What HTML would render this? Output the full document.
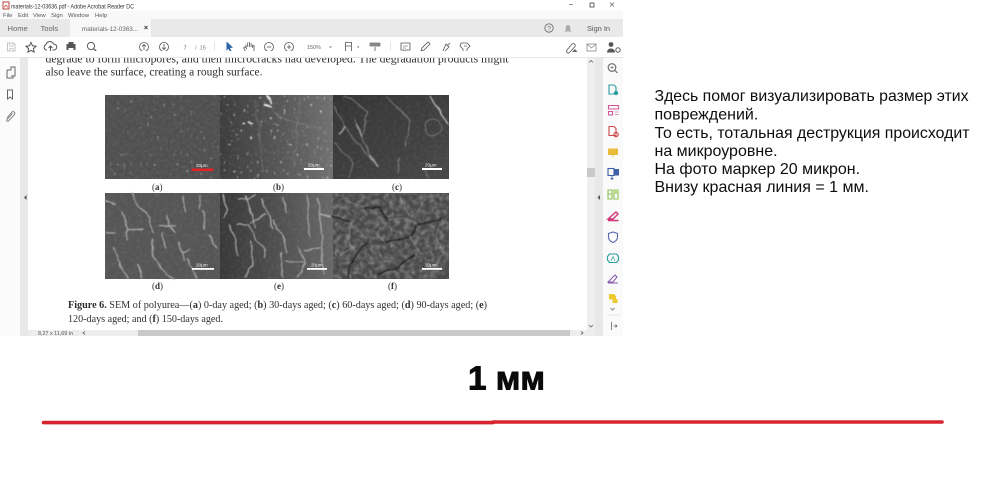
<!DOCTYPE html>
<html><head><meta charset="utf-8"><style>
html,body{margin:0;padding:0;background:#fff;width:1000px;height:484px;overflow:hidden}
svg{display:block;position:absolute;left:0;top:0}
.u{font-family:"Liberation Sans",sans-serif}
.s{font-family:"Liberation Serif",serif;fill:#2e2e2e}
.r{font-family:"Liberation Sans",sans-serif;font-size:16px;fill:#0d0d0d}
</style></head><body>
<svg width="1000" height="484" viewBox="0 0 1000 484" xmlns="http://www.w3.org/2000/svg">
<defs>
<filter id="n" x="0" y="0" width="100%" height="100%"><feTurbulence type="fractalNoise" baseFrequency=".35" numOctaves="2" seed="4"/><feColorMatrix values="0 0 0 0 1 0 0 0 0 1 0 0 0 0 1 1.6 0 0 0 -.72"/><feGaussianBlur stdDeviation=".5"/></filter>
<filter id="sp" x="0" y="0" width="100%" height="100%"><feTurbulence type="fractalNoise" baseFrequency=".3" numOctaves="1" seed="9"/><feColorMatrix values="0 0 0 0 1 0 0 0 0 1 0 0 0 0 1 8 0 0 0 -5.300"/><feGaussianBlur stdDeviation=".4"/></filter>
<filter id="m" x="0" y="0" width="100%" height="100%"><feTurbulence type="fractalNoise" baseFrequency=".2" numOctaves="3" seed="12"/><feColorMatrix values="0 0 0 0 .8 0 0 0 0 .8 0 0 0 0 .8 2 0 0 0 -.8"/><feGaussianBlur stdDeviation=".4"/></filter>
<filter id="w" x="100" y="90" width="355" height="195" filterUnits="userSpaceOnUse"><feTurbulence type="fractalNoise" baseFrequency=".09" numOctaves="2" seed="3" result="t"/><feDisplacementMap in="SourceGraphic" in2="t" scale="5" xChannelSelector="R" yChannelSelector="G"/><feGaussianBlur stdDeviation=".55"/></filter>
<filter id="soft" x="0" y="0" width="640" height="350" filterUnits="userSpaceOnUse"><feGaussianBlur stdDeviation=".28"/></filter>
<linearGradient id="gb" x1="0" x2="1" y1="0" y2="0"><stop offset="0" stop-color="#3c3c3c"/><stop offset=".6" stop-color="#5a5a5a"/><stop offset="1" stop-color="#707070"/></linearGradient>
<linearGradient id="gc" x1="0" x2="1" y1="0" y2="1"><stop offset="0" stop-color="#343434"/><stop offset="1" stop-color="#484848"/></linearGradient>
<linearGradient id="ge" x1="0" x2="1" y1="0" y2="0"><stop offset="0" stop-color="#383838"/><stop offset=".6" stop-color="#545454"/><stop offset="1" stop-color="#686868"/></linearGradient>
</defs>

<g filter="url(#soft)">
<!-- chrome backgrounds -->
<rect x="0" y="0" width="623" height="11" fill="#fff"/>
<rect x="0" y="11" width="623" height="8" fill="#f9f9f9"/>
<rect x="0" y="19" width="623" height="18" fill="#e9e9e9"/>
<rect x="70" y="19" width="81" height="18" fill="#f8f8f8"/>
<rect x="0" y="37" width="623" height="20" fill="#fff"/>
<rect x="0" y="57" width="623" height="1" fill="#e6e6e6"/>
<rect x="0" y="58" width="20" height="278" fill="#fbfbfb"/>
<rect x="20" y="58" width="8" height="278" fill="#e8e8e8"/>
<rect x="28" y="58" width="559" height="272" fill="#fff"/>
<rect x="587" y="58" width="8" height="272" fill="#efefef"/>
<rect x="595" y="58" width="8" height="278" fill="#e8e8e8"/>
<rect x="603" y="58" width="20" height="278" fill="#fafafa"/>
<rect x="587" y="168" width="8" height="9" fill="#c9c9c9"/>
<rect x="28" y="330" width="567" height="6" fill="#ededed"/>
<rect x="138" y="330" width="432" height="6" fill="#c9c9c9"/>

<!-- title + menu -->
<rect x="3" y="2" width="6" height="7" fill="#fff" stroke="#b3423a" stroke-width="1"/>
<path d="M4.500 7.500 Q6 3 7.500 7.500" fill="none" stroke="#c0392b" stroke-width=".8"/>
<text class="u" x="11" y="8.300" font-size="6" fill="#333" textLength="123" lengthAdjust="spacingAndGlyphs">materials-12-03636.pdf - Adobe Acrobat Reader DC</text>
<g class="u" font-size="5.900" fill="#555">
<text x="3" y="17.200">File</text><text x="18" y="17.200">Edit</text><text x="33" y="17.200">View</text><text x="51" y="17.200">Sign</text><text x="68" y="17.200">Window</text><text x="95" y="17.200">Help</text>
</g>
<path d="M569 4.500h4" stroke="#777" stroke-width=".8"/>
<rect x="590" y="3" width="4" height="4" fill="none" stroke="#555" stroke-width=".9"/>
<path d="M610 2.500l4 4m0-4l-4 4" stroke="#666" stroke-width=".8"/>

<!-- tabs -->
<g class="u" fill="#666">
<text x="7.500" y="31" font-size="7.600">Home</text>
<text x="40.500" y="31" font-size="7.600">Tools</text>
<text x="82" y="31" font-size="6.300">materials-12-0363...</text>
<path d="M144.500 26l3 3m0-3l-3 3" stroke="#444" stroke-width=".9"/>
<text x="587" y="31" font-size="7.400" fill="#555">Sign In</text>
</g>
<circle cx="549" cy="28" r="4.200" fill="none" stroke="#666" stroke-width=".8"/>
<text class="u" x="547.400" y="30.400" font-size="6.400" fill="#666">?</text>
<path d="M564.500 31.500h7l-1.300-1.800v-2.500a2.200 2.200 0 0 0-4.400 0v2.500z" fill="#aaa"/>

<!-- toolbar icons -->
<g fill="none" stroke="#555" stroke-width="1">
<path d="M7.500 43h6l1.500 1.500v6.500h-7.500z" stroke="#c4c4c4"/><path d="M9.500 43v3h3.500v-3M9.500 51v-2.500h3.500v2.500" stroke="#c4c4c4" stroke-width=".7"/>
<path d="M31 42.500l1.500 3.300 3.500.4-2.600 2.400.7 3.500-3.100-1.800-3.100 1.800.7-3.500-2.600-2.400 3.500-.4z"/>
<path d="M47 50h-1a3 3 0 0 1 0-5.500 4 4 0 0 1 7.500-.5 3 3 0 0 1 .5 6h-1.500"/><path d="M50.500 52v-6m-2 2l2-2 2 2"/>
<circle cx="91" cy="46" r="3.600"/><path d="M93.700 48.700l3 3" stroke-width="1.200"/>
<circle cx="144" cy="47" r="4.500" stroke-width=".8"/><path d="M144 50v-5.500m-2 2l2-2 2 2" stroke-width=".8"/>
<circle cx="164" cy="47" r="4.500" stroke-width=".8"/><path d="M164 44v5.500m-2-2l2 2 2-2" stroke-width=".8"/>
<path d="M214.500 41v13" stroke="#ddd" stroke-width=".8"/>
<path d="M246 48v-3.500m1.700 2.500v-4.500m1.700 4.500v-5m1.700 5v-4m1.400 5v-2.500a1 1 0 0 1 1.500 0v4.500a4 4 0 0 1-4 3.500h-1.500a3.500 3.500 0 0 1-3-2l-1.500-3a1 1 0 0 1 1.800-1l1 1.500" stroke-width=".8"/>
<circle cx="269" cy="47" r="4.500" stroke-width=".8"/><path d="M266.800 47h4.400" stroke-width=".8"/>
<circle cx="289" cy="47" r="4.500" stroke-width=".8"/><path d="M286.800 47h4.400m-2.200-2.200v4.400" stroke-width=".8"/>
<path d="M345 42.500h7m-7 10h7M345.500 42.500v3M351.500 42.500v3M345.500 46h6v6h-6z" stroke-width=".8"/>
<path d="M370 43h10v3h-10z" fill="#888" stroke="#777" stroke-width=".7"/><path d="M375 47v6m-2-2l2 2 2-2" stroke-width=".8"/>
<path d="M390.500 41v13" stroke="#ddd" stroke-width=".8"/>
<path d="M401 43h9v7h-4l-2 2.500v-2.500h-3z" stroke-width=".8"/><path d="M403 46h5M403 48h3" stroke-width=".6"/>
<path d="M421 51l1-3 6-6 2 2-6 6z" stroke-width=".8"/><path d="M420 52.500h7" stroke="#c9a227" stroke-width=".9"/>
<path d="M441 52h9M443 51l3-7 3 3-4 4M447 46l3-3" stroke-width=".8"/>
<path d="M461 43h6l3 3-3 3v3h-4v-3l-3-3z" stroke-width=".8"/><path d="M464 46h3" stroke-width=".7"/>
<path d="M567 50l5-6a2 2 0 0 1 3 2.500l-5.500 6a1.500 1.500 0 0 1-2.500-2z" stroke-width=".8"/><path d="M572 52l3-3 2.500 3z" fill="#666" stroke="none"/>
<rect x="587" y="44" width="9" height="7" stroke="#888" stroke-width=".8"/><path d="M587 44l4.500 4 4.500-4" stroke="#888" stroke-width=".7"/>
</g>
<path d="M66.500 44h9v6h-2v2h-5v-2h-2z M68.500 42h5v2h-5z" fill="#555"/>
<rect x="68.500" y="48" width="5" height="3.500" fill="#fff"/>
<path d="M226.500 41.500l6.500 6-3 .5 1.800 3.500-1.500.8-1.800-3.500-2 2z" fill="#2a64a8"/>
<g class="u">
<text x="183.500" y="49.500" font-size="5.800" fill="#666">7</text>
<path d="M179 53h11" stroke="#ddd" stroke-width=".6"/>
<text x="195" y="49.500" font-size="5.600" fill="#777">/ &#160;15</text>
<text x="307" y="49.200" font-size="5.400" fill="#666">150%</text>
<path d="M329 46.500l1.500 1.500 1.500-1.500" fill="#777"/>
<path d="M357 46.500h2.500l-1.250 1.500z" fill="#666"/>
<circle cx="611" cy="44.500" r="2.400" fill="#555"/><path d="M607 52.500a4 4 0 0 1 8 0z" fill="#555"/><circle cx="618" cy="50" r="2.200" fill="none" stroke="#555" stroke-width="1"/>
</g>

<!-- document text -->
<g class="s" font-size="11.400">
<text x="45.500" y="62.500" textLength="463" lengthAdjust="spacingAndGlyphs">degrade to form micropores, and then microcracks had developed.  The degradation products might</text>
<text x="45.500" y="75.500" textLength="217" lengthAdjust="spacingAndGlyphs">also leave the surface, creating a rough surface.</text>
</g>
<rect x="40" y="51" width="480" height="6" fill="#fff"/>
<rect x="28" y="57" width="559" height="1" fill="#e6e6e6"/>

<!-- SEM panels -->
<rect x="105" y="95" width="115" height="84" fill="#505050"/>
<rect x="220" y="95" width="113" height="84" fill="url(#gb)"/>
<rect x="333" y="95" width="116" height="84" fill="url(#gc)"/>
<rect x="105" y="193" width="115" height="86" fill="#565656"/>
<rect x="220" y="193" width="113" height="86" fill="url(#ge)"/>
<rect x="333" y="193" width="116" height="86" fill="#484848"/>
<rect x="105" y="95" width="344" height="184" filter="url(#n)" opacity=".12"/>
<rect x="105" y="95" width="115" height="84" filter="url(#sp)" opacity=".4"/>
<rect x="220" y="95" width="113" height="84" filter="url(#sp)" opacity=".75"/>
<rect x="333" y="193" width="116" height="86" filter="url(#m)" opacity=".42"/>
<g fill="none" stroke-linecap="round" stroke-linejoin="round" filter="url(#w)">
<!-- b -->
<path d="M272 112l20 10 25 6M255 100l8 70M300 98l-6 70" stroke="#999" stroke-width=".7" opacity=".55"/>
<path d="M266 96l5 8M265 104l6 4M243 124l2 0M249 122l3 1" stroke="#eee" stroke-width="1.600"/>
<!-- c -->
<g stroke="#7d7d7d" stroke-width="1.400">
<path d="M335 107l10 20 15 20 17 18M355 120l5 13 10 22M345 95l23 17-5 21M335 143l18 19-5 16M387 97l23 23-5 27M400 158l-2 14M430 178l-7-10" opacity=".8"/>
<path d="M430 97l18 26" stroke="#b0b0b0" stroke-width="1.700"/>
<circle cx="433" cy="127" r="8" stroke="#707070" stroke-width="1"/>
<path d="M356 124l5 11M370 155l8 11M345 127l-6 6" stroke="#9a9a9a" stroke-width="2.200"/>
</g>
<!-- d -->
<g stroke="#a8a8a8" stroke-width="1.300">
<path d="M132 193l5 10 13 15 3 15M122 212l5 18 1 10M128 231l15-2M168 215v10l7 8M160 225l15 1M183 198l2 14M203 210l2 18M200 197v11M153 240v17l12 16M178 242l4 11 8-3M182 253l2 7M187 258l10 20M113 247l7 18 8 13M137 265l5 13M163 233l2 15M105 233h10M105 200l10 5M210 235l6 14M165 273l10 6"/>
<!-- e -->
<path d="M222 195l6 15-4 8M230 225l5 15 2 15M245 195l8 25 2 7M263 200l10 28M237 225h10l16 23 2 9M250 240l3 25-8 12M283 197l3 16M307 195l2 42M318 198l2 15 12 4M320 213l2 29v20l3 13M273 220l12 20 1 13M280 253l4 24M298 247l7 15-7 15M305 250l15-2M287 262h16M240 200l15-5M265 215l-15 8"/>
</g>
<!-- f -->
<g stroke="#1d1d1d" stroke-width="1.200">
<path d="M333 217l19 5M363 208h17l7 14M367 243l-15 17-5 17M383 242l27-4 7-13 26-7M378 275l19-7 16-13"/>
</g>
<g stroke="#9a9a9a" stroke-width=".8">
<path d="M352 222l-4 18 8 12M387 222l-10 12 8 8M417 225l-12-8-15 4M443 218l-8 18 8 18-10 14M345 200l20 8M400 196l10 20M410 238l12 16M340 255l15-8M385 262l-8-12M425 200l-10 14" opacity=".8"/>
</g>
</g>
<!-- scale bars -->
<g fill="#fff">
<rect x="191.500" y="168.500" width="22" height="2.600" fill="#e3232b"/>
<rect x="304" y="168" width="20" height="2"/>
<rect x="422" y="168" width="20" height="2"/>
<rect x="192" y="268" width="22" height="1.800"/>
<rect x="307" y="268" width="20" height="1.800"/>
<rect x="422" y="268" width="20" height="1.800"/>
</g>
<g class="u" font-size="4.600" fill="#f2f2f2">
<text x="196" y="167">20µm</text><text x="308" y="166.500">20µm</text><text x="425" y="166.500">20µm</text>
<text x="196" y="266.500">20µm</text><text x="311" y="266.500">20µm</text><text x="425" y="266.500">20µm</text>
</g>
<g class="s" font-size="9" fill="#333">
<text x="152" y="190">(<tspan font-weight="bold">a</tspan>)</text>
<text x="273" y="190">(<tspan font-weight="bold">b</tspan>)</text>
<text x="392" y="190">(<tspan font-weight="bold">c</tspan>)</text>
<text x="152" y="289">(<tspan font-weight="bold">d</tspan>)</text>
<text x="274" y="289">(<tspan font-weight="bold">e</tspan>)</text>
<text x="388" y="289">(<tspan font-weight="bold">f</tspan>)</text>
</g>
<g class="s" font-size="10.600">
<text x="68" y="308" textLength="419" lengthAdjust="spacingAndGlyphs"><tspan font-weight="bold">Figure 6.</tspan> SEM of polyurea—(<tspan font-weight="bold">a</tspan>) 0-day aged; (<tspan font-weight="bold">b</tspan>) 30-days aged; (<tspan font-weight="bold">c</tspan>) 60-days aged; (<tspan font-weight="bold">d</tspan>) 90-days aged; (<tspan font-weight="bold">e</tspan>)</text>
<text x="68" y="322" textLength="155" lengthAdjust="spacingAndGlyphs">120-days aged; and (<tspan font-weight="bold">f</tspan>) 150-days aged.</text>
</g>

<!-- left pane -->
<g fill="none" stroke="#666" stroke-width="1">
<path d="M7 70h4v-3h4v9h-4" /><path d="M7 70v8h6v-2" />
<path d="M7.500 90h5v9l-2.500-2-2.500 2z"/>
<path d="M7 118l5-6a1.800 1.800 0 0 1 2.500 2.500l-6 6.500a1 1 0 0 1-1.500-1.500l5.500-6" stroke-width=".8"/>
</g>
<path d="M26.500 195v5l-2.500-2.500z" fill="#555"/>
<path d="M600 195v5l-2.500-2.500z" fill="#555"/>
<!-- scroll chevrons -->
<path d="M589 62.500l2-2 2 2M589 325l2 2 2-2" fill="none" stroke="#666" stroke-width=".8"/>
<path d="M85 331.500l-2 1.500 2 1.500M581 331.500l2 1.500-2 1.500" fill="none" stroke="#666" stroke-width=".8"/>
<text class="u" x="38" y="335" font-size="5.400" fill="#555">8,27 x 11,69 in</text>

<!-- right pane icons -->
<g fill="none" stroke-width="1.100">
<circle cx="612" cy="67.500" r="3.800" stroke="#666"/><path d="M615 70.500l2.500 2.500" stroke="#666"/><path d="M610.500 67.500h3m-1.500-1.500v3" stroke="#666" stroke-width=".7"/>
<path d="M609 85h5l2 2v7h-7z" stroke="#2a9d9d"/><circle cx="616" cy="93" r="2.200" fill="#2a9d9d" stroke="none"/>
<path d="M608.500 105.500h10v3.500h-10zM608.500 111.500h4v3.500h-4z" stroke="#d1559b"/><path d="M614.500 112h4M614.500 114.500h4" stroke="#d99ac4"/>
<path d="M609 126.500h5l2 2v7h-7z" stroke="#d0484a"/><circle cx="616" cy="134.500" r="2.200" fill="none" stroke="#d0484a"/>
<path d="M608 148.500h10v6.500h-4l-1.500 2.500v-2.500h-4.500z" fill="#e8bd3a" stroke="none"/>
<rect x="608" y="168.500" width="6" height="7" stroke="#3e5fa8"/><rect x="614" y="169" width="5" height="6.500" fill="#3e5fa8" stroke="none"/><path d="M612 176v3m-1.500-1l1.500 1.500 1.500-1.500" stroke="#3e5fa8" stroke-width=".8"/>
<path d="M608 190h4v9h-4zM614 190h4v9h-4zM608 194h4" stroke="#8cc152"/><rect x="614" y="190" width="4" height="4" fill="#b9dc8f" stroke="none"/>
<path d="M608 219l8-7 2 2-5 5zM608 220.500h10.500" stroke="#d1357a" stroke-width="1.400"/>
<path d="M613 232l4.500 1.500v3.500c0 2.500-2 4.500-4.500 5.500-2.500-1-4.500-3-4.500-5.500v-3.500z" stroke="#5566b0"/>
<path d="M609.500 254h7l2 2.500v3.500l-2 2.500h-7l-2-2.500v-3.500z" stroke="#2a9d9d"/><path d="M611 261l2-4.500 2 4.500" stroke="#2a9d9d" stroke-width=".7"/>
<path d="M608 282l7-7 2 2-4 5zM608 283h10" stroke="#8a5fb0"/>
<path d="M609 294h5l2 2v3.500h-7z" fill="#ecc92f" stroke="none"/><rect x="612.500" y="299" width="5" height="4" fill="#ecc92f"/>
<path d="M610.500 308l2 2 2-2" stroke="#666" stroke-width=".8"/>
<path d="M607 315h14" stroke="#e0e0e0" stroke-width=".7"/>
<path d="M611.500 322v8M613.500 326h3.500m-1.500-1.500l1.500 1.500-1.500 1.500" stroke="#666" stroke-width=".8"/>
</g>
</g>

<!-- right commentary -->
<text class="r" x="654.500" y="101" textLength="314" lengthAdjust="spacingAndGlyphs">Здесь помог визуализировать размер этих</text>
<text class="r" x="654.500" y="119.500">повреждений.</text>
<text class="r" x="654.500" y="138" textLength="315" lengthAdjust="spacingAndGlyphs">То есть, тотальная деструкция происходит</text>
<text class="r" x="654.500" y="156">на микроуровне.</text>
<text class="r" x="654.500" y="174">На фото маркер 20 микрон.</text>
<text class="r" x="654.500" y="192">Внизу красная линия = 1 мм.</text>

<!-- 1 mm -->
<text x="468" y="389.500" font-family="'Liberation Sans',sans-serif" font-weight="bold" font-size="33" fill="#0a0a0a" stroke="#0a0a0a" stroke-width=".9" textLength="77" lengthAdjust="spacingAndGlyphs">1 мм</text>
<path d="M43.500 422.600H493" stroke="#d7252f" stroke-width="3.600" stroke-linecap="round"/>
<path d="M493 422H942" stroke="#d7252f" stroke-width="3.600" stroke-linecap="round"/>
</svg>
</body></html>
